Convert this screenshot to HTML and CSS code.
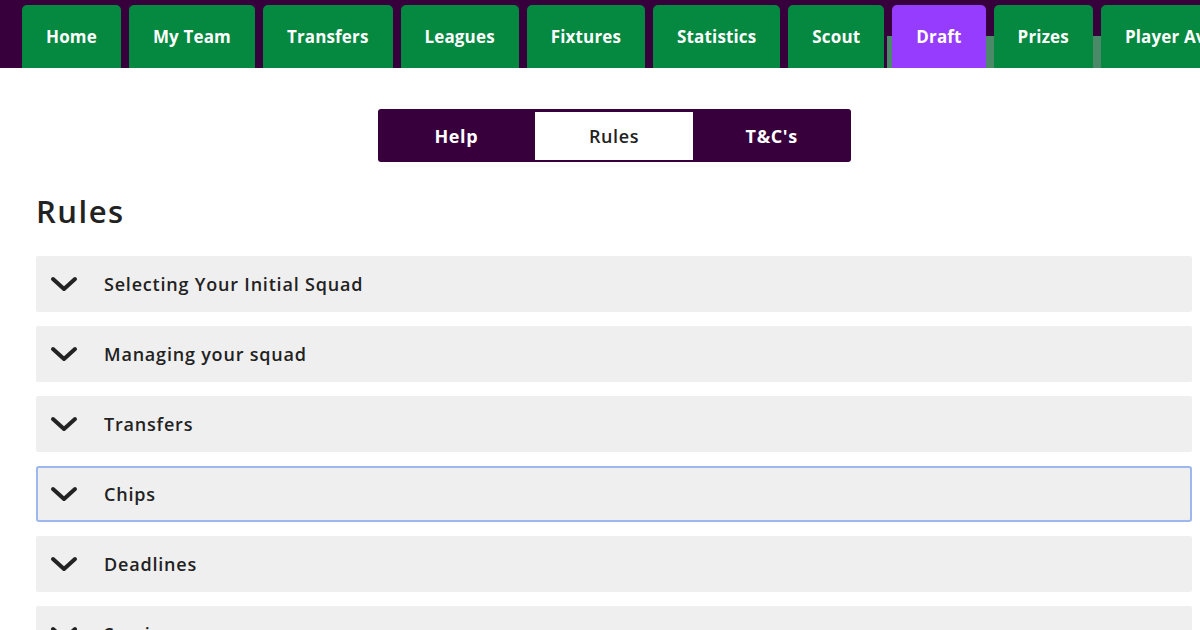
FILE: index.html
```html
<!DOCTYPE html>
<html lang="en">
<head>
    <meta charset="UTF-8">
    <meta name="viewport" content="width=device-width, initial-scale=1.0">
    <title>Fantasy - Rules</title>
    <link rel="stylesheet" href="styles.css">
</head>
<body>

<header class="top-nav">
    <nav class="tabs">
        <a class="tab" href="#">Home</a>
        <a class="tab" href="#">My Team</a>
        <a class="tab" href="#">Transfers</a>
        <a class="tab" href="#">Leagues</a>
        <a class="tab" href="#">Fixtures</a>
        <a class="tab" href="#">Statistics</a>
        <a class="tab" href="#">Scout</a>
        <a class="tab tab-draft" href="#">Draft</a>
        <a class="tab" href="#">Prizes</a>
        <a class="tab" href="#">Player Availability</a>
    </nav>
</header>

<div class="container">

    <!-- Sotto menu -->
    <div class="subnav">
        <a class="subnav-item" href="#">Help</a>
        <a class="subnav-item active" href="#">Rules</a>
        <a class="subnav-item" href="#">T&amp;C's</a>
    </div>

    <h1 class="title">Rules</h1>

    <!-- Elenco regole -->
    <div class="accordion">
        <button class="rule">
            <svg class="chevron" viewBox="0 0 28 16"><polyline points="3,3 14,13 25,3"/></svg>
            <span>Selecting Your Initial Squad</span>
        </button>
        <button class="rule">
            <svg class="chevron" viewBox="0 0 28 16"><polyline points="3,3 14,13 25,3"/></svg>
            <span>Managing your squad</span>
        </button>
        <button class="rule">
            <svg class="chevron" viewBox="0 0 28 16"><polyline points="3,3 14,13 25,3"/></svg>
            <span>Transfers</span>
        </button>
        <button class="rule focused">
            <svg class="chevron" viewBox="0 0 28 16"><polyline points="3,3 14,13 25,3"/></svg>
            <span>Chips</span>
        </button>
        <button class="rule">
            <svg class="chevron" viewBox="0 0 28 16"><polyline points="3,3 14,13 25,3"/></svg>
            <span>Deadlines</span>
        </button>
        <button class="rule">
            <svg class="chevron" viewBox="0 0 28 16"><polyline points="3,3 14,13 25,3"/></svg>
            <span>Scoring</span>
        </button>
    </div>

</div>

</body>
</html>
```

FILE: styles.css
```css
/* Base */
body {
    font-family: "Open Sans", Lato, sans-serif;
    background-color: #fff;
    margin: 0;
    padding: 0;
    color: #222;
    overflow: hidden;
    height: 630px;
}

a {
    text-decoration: none;
}

/* Barra superiore */
.top-nav {
    height: 68px;
    background-color: #37003c;
    background-image: linear-gradient(#4b8a68, #4b8a68);
    background-size: 313px 32px;
    background-position: right bottom;
    background-repeat: no-repeat;
    overflow: hidden;
}

.tabs {
    display: flex;
    gap: 8px;
    padding: 5px 0 0 22px;
    height: 63px;
}

.tab {
    flex: none;
    display: flex;
    align-items: center;
    padding: 0 24px;
    background-color: #05883f;
    color: #fff;
    font-weight: 700;
    font-size: 17px;
    letter-spacing: 0.15px;
    border-radius: 5px 5px 0 0;
    white-space: nowrap;
}

.tab-draft {
    background-color: #963cff;
}

/* Contenuto */
.container {
    padding: 0 8px 0 36px;
}

.subnav {
    display: flex;
    width: 473px;
    height: 53px;
    margin: 41px auto 0;
    background-color: #37003c;
    border-radius: 3px;
    box-sizing: border-box;
    padding: 3px 0 2px;
}

.subnav-item {
    flex: 1;
    display: flex;
    align-items: center;
    justify-content: center;
    color: #fff;
    font-weight: 700;
    font-size: 18px;
    letter-spacing: 0.6px;
}

.subnav-item.active {
    background-color: #fff;
    color: #222;
    font-weight: 600;
}

.title {
    font-size: 31px;
    font-weight: 600;
    letter-spacing: 1.5px;
    margin: 29px 0 25px;
    line-height: 40px;
    color: #222;
}

.accordion {
    display: flex;
    flex-direction: column;
    gap: 14px;
}

.rule {
    display: flex;
    align-items: center;
    height: 56px;
    padding: 0 0 0 14px;
    background-color: #efefef;
    border: none;
    border-radius: 2px;
    font-family: inherit;
    font-size: 18px;
    font-weight: 600;
    letter-spacing: 0.8px;
    color: #222;
    text-align: left;
    cursor: pointer;
}

.rule.focused {
    box-shadow: inset 0 0 0 2px #9cb8ec;
    border-radius: 3px;
}

.chevron {
    width: 28px;
    height: 16px;
    margin-right: 26px;
    fill: none;
    stroke: #222;
    stroke-width: 4;
    stroke-linejoin: round;
    stroke-linecap: round;
}
```
